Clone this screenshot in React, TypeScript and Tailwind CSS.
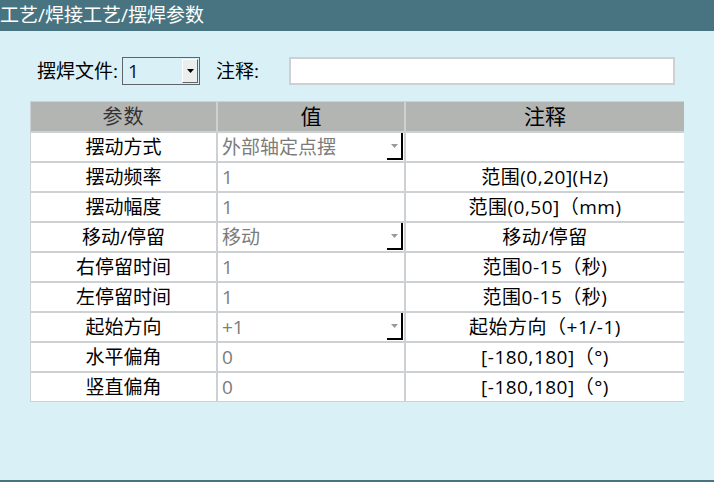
import React from "react";

type Row = { name: string; value: string; note: string; combo?: boolean };

const rows: Row[] = [
  { name: "摆动方式", value: "外部轴定点摆", note: "", combo: true },
  { name: "摆动频率", value: "1", note: "范围(0,20](Hz)" },
  { name: "摆动幅度", value: "1", note: "范围(0,50]（mm)" },
  { name: "移动/停留", value: "移动", note: "移动/停留", combo: true },
  { name: "右停留时间", value: "1", note: "范围0-15（秒)" },
  { name: "左停留时间", value: "1", note: "范围0-15（秒)" },
  { name: "起始方向", value: "+1", note: "起始方向（+1/-1)", combo: true },
  { name: "水平偏角", value: "0", note: "[-180,180]（°)" },
  { name: "竖直偏角", value: "0", note: "[-180,180]（°)" },
];

function CellArrow() {
  return (
    <div className="absolute right-[1px] top-0 bottom-[1px] w-[16px] border-r-2 border-b-2 border-black flex items-center justify-center">
      <svg width="7" height="4" viewBox="0 0 7 4">
        <polygon points="0,0 7,0 3.5,4" fill="#9a9a9a" />
      </svg>
    </div>
  );
}

export default function App() {
  return (
    <div className="w-[714px] h-[482px] bg-[#d9f0f7] flex flex-col overflow-hidden font-['Open_Sans','Noto_Sans_CJK_SC',sans-serif]">
      <div className="h-[31px] bg-[#477480] text-white text-[19px] leading-[31px] pl-0 shrink-0">
        工艺/焊接工艺/摆焊参数
      </div>
      <div className="flex-1 flex flex-col">
        <div className="mt-[26px] h-[28px] flex items-center text-[19px] text-black">
          <span className="ml-[37px] w-[85px]">摆焊文件:</span>
          <div className="w-[78px] h-[28px] border border-[#5f6468] bg-[#d9f0f7] flex items-center relative">
            <span className="ml-[5px] text-[19px] text-[#101030]">1</span>
            <div className="absolute right-[1px] top-[1px] bottom-[1px] w-[16px] bg-[#eceeee] border-r border-b border-[#5f6468] border-l border-t border-l-white border-t-white flex items-center justify-center">
              <svg width="7" height="4" viewBox="0 0 7 4">
                <polygon points="0,0 7,0 3.5,4" fill="#000" />
              </svg>
            </div>
          </div>
          <span className="ml-[16px] w-[73px]">注释:</span>
          <div className="w-[386px] h-[28px] bg-white border-2 border-[#cdd1d4]" />
        </div>
        <div className="mt-[16px] ml-[30px] w-[654px] bg-[#cdd1d4] p-[1px] grid grid-cols-[185px_186px_278px] gap-[2px]">
          <div className="h-[29px] bg-[#b3b5b3] flex items-center justify-center text-[20px] text-[#333] tracking-[1px]">参数</div>
          <div className="h-[29px] bg-[#b3b5b3] flex items-center justify-center text-[21px] text-black">值</div>
          <div className="h-[29px] bg-[#b3b5b3] flex items-center justify-center text-[21px] text-black">注释</div>
          {rows.map((r) => (
            <React.Fragment key={r.name}>
              <div className="h-[28px] bg-white flex items-center justify-center text-[19px] text-black">{r.name}</div>
              <div className="h-[28px] bg-white flex items-center pl-[4px] text-[19px] text-[#7c7c7c] relative">
                {r.value}
                {r.combo && <CellArrow />}
              </div>
              <div className="h-[28px] bg-white flex items-center justify-center text-[19px] tracking-[0.5px] text-black">{r.note}</div>
            </React.Fragment>
          ))}
        </div>
      </div>
      <div className="h-[2px] bg-[#477480] shrink-0" />
    </div>
  );
}
